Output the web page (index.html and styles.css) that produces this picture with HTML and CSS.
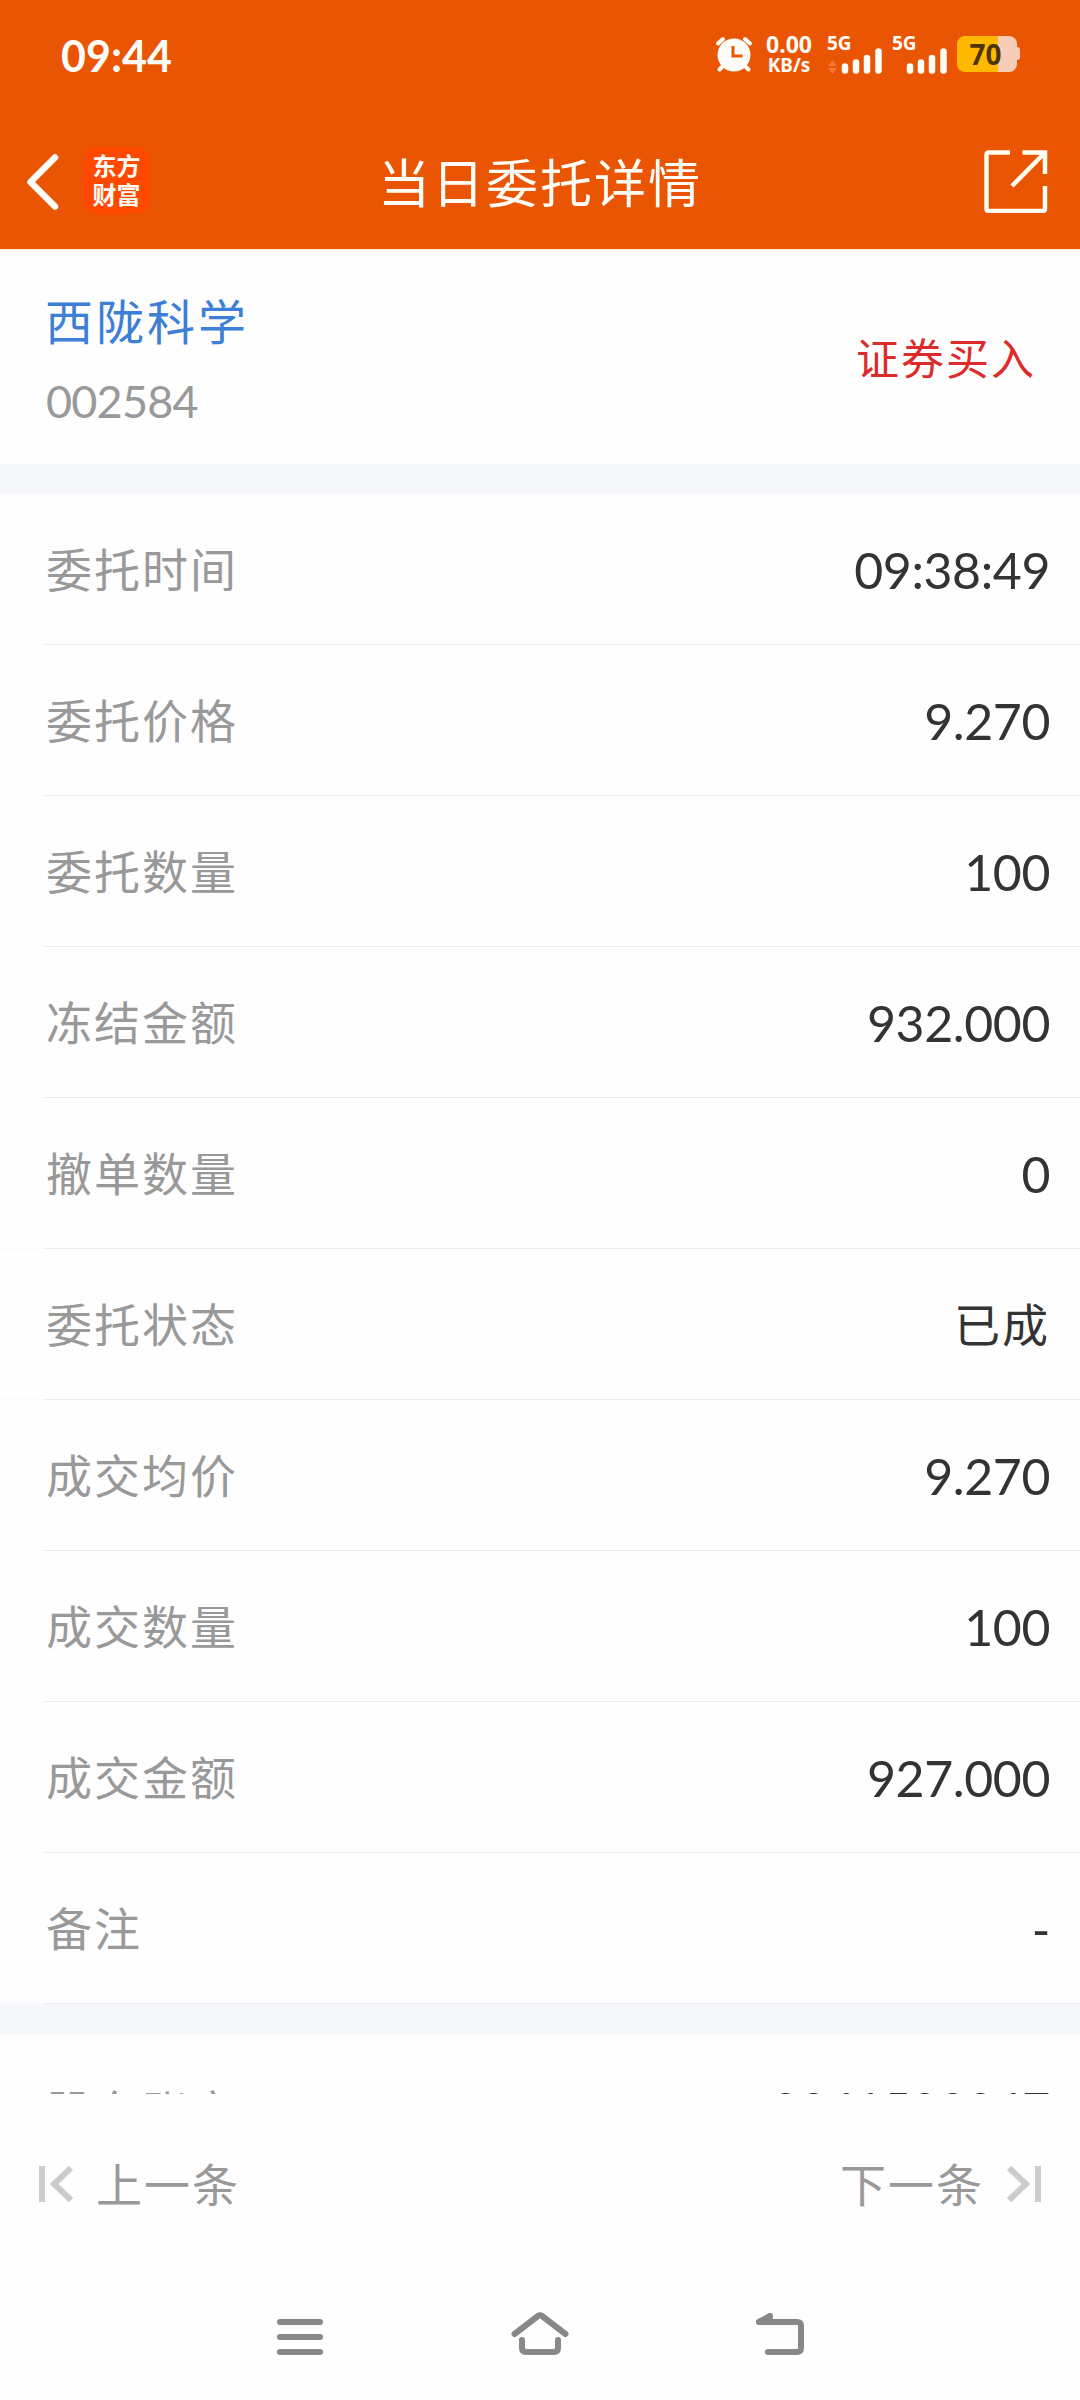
FILE: index.html
```html
<!DOCTYPE html>
<html lang="zh-CN">
	<head>
		<meta charset="UTF-8">
		<meta name="viewport" content="width=device-width, initial-scale=1">
		<title>当日委托详情</title>
		<link rel="stylesheet" href="styles.css">
	</head>
	<body>
		<header>
			<div class="status">
				<span class="clock">09:44</span>
				<svg class="alarm" width="38" height="38" viewBox="0 0 38 38">
					<circle cx="19" cy="20" r="16.5" fill="#fffdf8"/>
					<path d="M3 8.500L8 4M35 8.500L30 4M7 32L4.500 34.500M31 32L33.500 34.500" fill="none" stroke="#fffdf8" stroke-width="4" stroke-linecap="round"/>
					<path d="M18 11V21H27.500" fill="none" stroke="#ea5504" stroke-width="3"/>
				</svg>
				<span class="speed">0.00<small>KB/s</small></span>
				<span class="signal">
					<b>5G</b>
					<svg width="56" height="38" viewBox="0 0 56 38">
						<path d="M1 29L5.500 23.500L10 29ZM1 31L5.500 37L10 31Z" fill="#f37a3a"/>
						<path d="M18 29.500V33.500M29 25.500V33.500M40 21V33.500M51.500 14.500V33.500" stroke="#fffdf8" stroke-width="6.500" stroke-linecap="round"/>
					</svg>
				</span>
				<span class="signal">
					<b>5G</b>
					<svg width="56" height="38" viewBox="0 0 56 38">
						<path d="M18 29.500V33.500M29 25.500V33.500M40 21V33.500M51.500 14.500V33.500" stroke="#fffdf8" stroke-width="6.500" stroke-linecap="round"/>
					</svg>
				</span>
				<span class="battery">70</span>
			</div>
			<div class="bar">
				<svg class="back" width="36" height="60" viewBox="0 0 36 60">
					<path d="M30 6.500L5.500 31L30 55.500" fill="none" stroke="#fffdf8" stroke-width="6.500" stroke-linecap="round" stroke-linejoin="round"/>
				</svg>
				<span class="logo">东方<br>财富</span>
				<h1>当日委托详情</h1>
				<svg class="share" width="64" height="64" viewBox="0 0 64 64">
					<path d="M26 3.500H5Q2.500 3.500 2.500 6V59.500Q2.500 62 5 62H58.500Q61 62 61 59.500V37M38.500 3.500H61V25M61 3.500L28 37" fill="none" stroke="#fffdf0" stroke-width="4.500"/>
				</svg>
			</div>
		</header>
		<section class="stock">
			<div>
				<h2>西陇科学</h2>
				<span class="code">002584</span>
			</div>
			<span class="side">证券买入</span>
		</section>
		<main>
			<ul>
				<li><label>委托时间</label><span>09:38:49</span></li>
				<li><label>委托价格</label><span>9.270</span></li>
				<li><label>委托数量</label><span>100</span></li>
				<li><label>冻结金额</label><span>932.000</span></li>
				<li><label>撤单数量</label><span>0</span></li>
				<li><label>委托状态</label><span class="cn">已成</span></li>
				<li><label>成交均价</label><span>9.270</span></li>
				<li><label>成交数量</label><span>100</span></li>
				<li><label>成交金额</label><span>927.000</span></li>
				<li><label>备注</label><span>-</span></li>
			</ul>
			<ul class="more">
				<li><label>股东账户</label><span>0041500047</span></li>
			</ul>
		</main>
		<div class="pager">
			<a>
				<svg width="34" height="36" viewBox="0 0 34 36">
					<path d="M3 0V36M32 2L15 18L32 34" fill="none" stroke="#ccc" stroke-width="6"/>
				</svg>
				<span>上一条</span>
			</a>
			<a>
				<span>下一条</span>
				<svg width="34" height="36" viewBox="0 0 34 36">
					<path d="M31 0V36M2 2L19 18L2 34" fill="none" stroke="#ccc" stroke-width="6"/>
				</svg>
			</a>
		</div>
		<nav>
			<svg width="60" height="48" viewBox="0 0 60 48">
				<path d="M10 12H50M10 27H50M10 42H50"/>
			</svg>
			<svg width="60" height="48" viewBox="0 0 60 48">
				<path d="M4.500 24L28 6Q30 4.500 32 6L55.500 24M12 30V38Q12 42 16 42H44Q48 42 48 38V30"/>
			</svg>
			<svg width="60" height="48" viewBox="0 0 60 48">
				<path d="M20 6L9 12H47Q51 12 51 16V38Q51 42 47 42H18"/>
				<path d="M9 12L20 9"/>
			</svg>
		</nav>
	</body>
</html>
```

FILE: styles.css
```css
*, *:before, *:after {
	box-sizing: border-box;
}
body {
	margin: 0;
	height: 2400px;
	overflow: hidden;
	display: flex;
	flex-direction: column;
	background: #fefefe;
	color: #333;
	font-family: Lato, "Noto Sans CJK SC", sans-serif;
	font-size: 46px;
}
svg {
	display: block;
	flex: none;
}
h1, h2, ul {
	margin: 0;
	padding: 0;
	font-weight: 400;
}
header {
	height: 250px;
	flex: none;
	background: #ea5504;
	border-bottom: 1px solid #fff3e0;
	color: #fffdf8;
}
.status {
	height: 112px;
	padding: 0 60px;
	display: flex;
	align-items: center;
}
.clock {
	flex: 1;
	padding: 0 0 1px 1px;
	font-size: 43px;
	font-weight: 700;
	line-height: 50px;
}
.alarm {
	margin: -4px 11px 0 0;
}
.speed {
	width: 50px;
	margin: -5px 13px 0 0;
	font: 700 23px/22px "Noto Sans", sans-serif;
	text-align: center;
}
.speed small {
	display: block;
	font-size: 19px;
	line-height: 20px;
}
.signal {
	position: relative;
	width: 56px;
	margin-right: 9px;
}
.signal b {
	position: absolute;
	top: -3px;
	left: 0;
	font: 700 19px/18px "Noto Sans", sans-serif;
}
.battery {
	position: relative;
	width: 60px;
	height: 36px;
	margin: -4px 3px 0 0;
	padding-right: 3px;
	border-radius: 8px;
	background: linear-gradient(90deg, #ffb900 41px, #f8cdb8 41px);
	color: #4d3500;
	font: 700 28px/36px "Noto Sans", sans-serif;
	text-align: center;
}
.battery:after {
	content: "";
	position: absolute;
	top: 11px;
	right: -3px;
	width: 3px;
	height: 13px;
	border-radius: 0 3px 3px 0;
	background: #f8cdb8;
}
.bar {
	height: 137px;
	padding: 0 32px 0 25px;
	display: flex;
	align-items: center;
}
.logo {
	width: 67px;
	height: 67px;
	margin-left: 22px;
	padding-top: 3px;
	border-radius: 14px;
	background: #ff4800;
	font: 700 24px/29px "Noto Sans CJK SC", sans-serif;
	text-align: center;
}
.bar h1 {
	flex: 1;
	padding: 4px 0 0 228px;
	font-size: 52px;
	letter-spacing: 2px;
	line-height: 60px;
}
.stock {
	height: 214px;
	flex: none;
	padding: 0 44px 0 45px;
	display: flex;
	justify-content: space-between;
	align-items: center;
}
.stock h2 {
	padding-top: 17px;
	color: #3d7fd6;
	font-size: 48px;
	letter-spacing: 3px;
	line-height: 70px;
}
.code {
	display: block;
	padding-left: 1px;
	color: #999;
	font-size: 45px;
	letter-spacing: -.8px;
	line-height: 88px;
}
.side {
	padding-bottom: 3px;
	color: #dc2b2b;
	font-size: 43px;
	letter-spacing: 2px;
}
main {
	height: 1630px;
	flex: none;
	overflow: hidden;
}
ul {
	border-top: 30px solid #f6f7fa;
	list-style: none;
}
li {
	height: 151px;
	padding: 0 30px 0 46px;
	display: flex;
	justify-content: space-between;
	align-items: center;
	background: linear-gradient(90deg, #fafafa 45px, #ececec 45px) 0 100% / 100% 1px no-repeat;
}
label {
	padding-bottom: 5px;
	color: #999;
	letter-spacing: 2px;
}
li span {
	font-size: 50px;
	letter-spacing: -.4px;
}
li .cn {
	padding-bottom: 5px;
	font-size: 46px;
	letter-spacing: 2px;
}
.more label {
	padding-bottom: 2px;
}
.more span {
	padding-bottom: 1px;
	font-size: 48px;
	letter-spacing: 0;
}
.pager {
	height: 180px;
	flex: none;
	padding: 0 39px;
	display: flex;
	justify-content: space-between;
	align-items: center;
	color: #999;
}
.pager a {
	display: flex;
	align-items: center;
	gap: 23px;
}
.pager span {
	padding-bottom: 4px;
	letter-spacing: 2px;
}
nav {
	padding: 36px 270px 0;
	display: flex;
	justify-content: space-between;
}
nav path {
	fill: none;
	stroke: #888;
	stroke-width: 6;
	stroke-linecap: round;
	stroke-linejoin: round;
}
```
